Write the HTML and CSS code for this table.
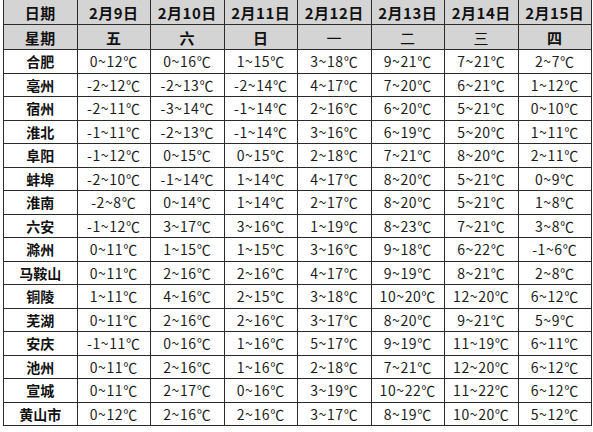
FILE: index.html
```html
<!DOCTYPE html>
<html lang="zh">
<head>
<meta charset="utf-8">
<title>安徽天气预报</title>
<link rel="stylesheet" href="styles.css">
</head>
<body>
<table class="wx">
  <thead>
    <tr class="hd">
      <th>日期</th><th>2月9日</th><th>2月10日</th><th>2月11日</th><th>2月12日</th><th>2月13日</th><th>2月14日</th><th>2月15日</th>
    </tr>
    <tr class="hd">
      <th>星期</th><th>五</th><th>六</th><th>日</th><th class="thin">一</th><th class="thin">二</th><th class="thin">三</th><th>四</th>
    </tr>
  </thead>
  <tbody>
    <tr><th>合肥</th><td>0~12℃</td><td>0~16℃</td><td>1~15℃</td><td>3~18℃</td><td>9~21℃</td><td>7~21℃</td><td>2~7℃</td></tr>
    <tr><th>亳州</th><td>-2~12℃</td><td>-2~13℃</td><td>-2~14℃</td><td>4~17℃</td><td>7~20℃</td><td>6~21℃</td><td>1~12℃</td></tr>
    <tr><th>宿州</th><td>-2~11℃</td><td>-3~14℃</td><td>-1~14℃</td><td>2~16℃</td><td>6~20℃</td><td>5~21℃</td><td>0~10℃</td></tr>
    <tr><th>淮北</th><td>-1~11℃</td><td>-2~13℃</td><td>-1~14℃</td><td>3~16℃</td><td>6~19℃</td><td>5~20℃</td><td>1~11℃</td></tr>
    <tr><th>阜阳</th><td>-1~12℃</td><td>0~15℃</td><td>0~15℃</td><td>2~18℃</td><td>7~21℃</td><td>8~20℃</td><td>2~11℃</td></tr>
    <tr><th>蚌埠</th><td>-2~10℃</td><td>-1~14℃</td><td>1~14℃</td><td>4~17℃</td><td>8~20℃</td><td>5~21℃</td><td>0~9℃</td></tr>
    <tr><th>淮南</th><td>-2~8℃</td><td>0~14℃</td><td>1~14℃</td><td>2~17℃</td><td>8~20℃</td><td>5~21℃</td><td>1~8℃</td></tr>
    <tr><th>六安</th><td>-1~12℃</td><td>3~17℃</td><td>3~16℃</td><td>1~19℃</td><td>8~23℃</td><td>7~21℃</td><td>3~8℃</td></tr>
    <tr><th>滁州</th><td>0~11℃</td><td>1~15℃</td><td>1~15℃</td><td>3~16℃</td><td>9~18℃</td><td>6~22℃</td><td>-1~6℃</td></tr>
    <tr><th>马鞍山</th><td>0~11℃</td><td>2~16℃</td><td>2~16℃</td><td>4~17℃</td><td>9~19℃</td><td>8~21℃</td><td>2~8℃</td></tr>
    <tr><th>铜陵</th><td>1~11℃</td><td>4~16℃</td><td>2~15℃</td><td>3~18℃</td><td>10~20℃</td><td>12~20℃</td><td>6~12℃</td></tr>
    <tr><th>芜湖</th><td>0~11℃</td><td>2~16℃</td><td>2~16℃</td><td>3~17℃</td><td>8~20℃</td><td>9~21℃</td><td>5~9℃</td></tr>
    <tr><th>安庆</th><td>-1~11℃</td><td>0~16℃</td><td>1~16℃</td><td>5~17℃</td><td>9~19℃</td><td>11~19℃</td><td>6~11℃</td></tr>
    <tr><th>池州</th><td>0~11℃</td><td>2~16℃</td><td>1~16℃</td><td>2~18℃</td><td>7~21℃</td><td>12~20℃</td><td>6~12℃</td></tr>
    <tr><th>宣城</th><td>0~11℃</td><td>2~17℃</td><td>0~16℃</td><td>3~19℃</td><td>10~22℃</td><td>11~22℃</td><td>6~12℃</td></tr>
    <tr><th>黄山市</th><td>0~12℃</td><td>2~16℃</td><td>2~16℃</td><td>3~17℃</td><td>8~19℃</td><td>10~20℃</td><td>5~12℃</td></tr>
  </tbody>
</table>
</body>
</html>
```
FILE: styles.css
```css
html, body {
  margin: 0;
  padding: 0;
  background: #ffffff;
}
body {
  padding: 0 2px 0 3px;
  font-family: "Noto Sans CJK SC", "Microsoft YaHei", sans-serif;
  color: #111111;
}
.wx {
  border-collapse: collapse;
  table-layout: fixed;
  width: 589px;
  margin-top: -1px;
}
.wx th, .wx td {
  border: 1px solid #2b2b2b;
  padding: 0;
  text-align: center;
  vertical-align: middle;
  white-space: nowrap;
  line-height: 1;
}
.wx th {
  font-size: 14px;
  font-weight: 700;
}
.wx td {
  font-size: 14px;
  font-weight: 400;
  letter-spacing: 0.6px;
  color: #1c1c1c;
}
.wx .hd th {
  background: #d4d4d4;
  height: 24px;
  font-size: 15px;
  letter-spacing: 0.5px;
}
.wx .hd th.thin {
  font-weight: 400;
}
.wx tbody tr {
  height: 23.5px;
}
```
